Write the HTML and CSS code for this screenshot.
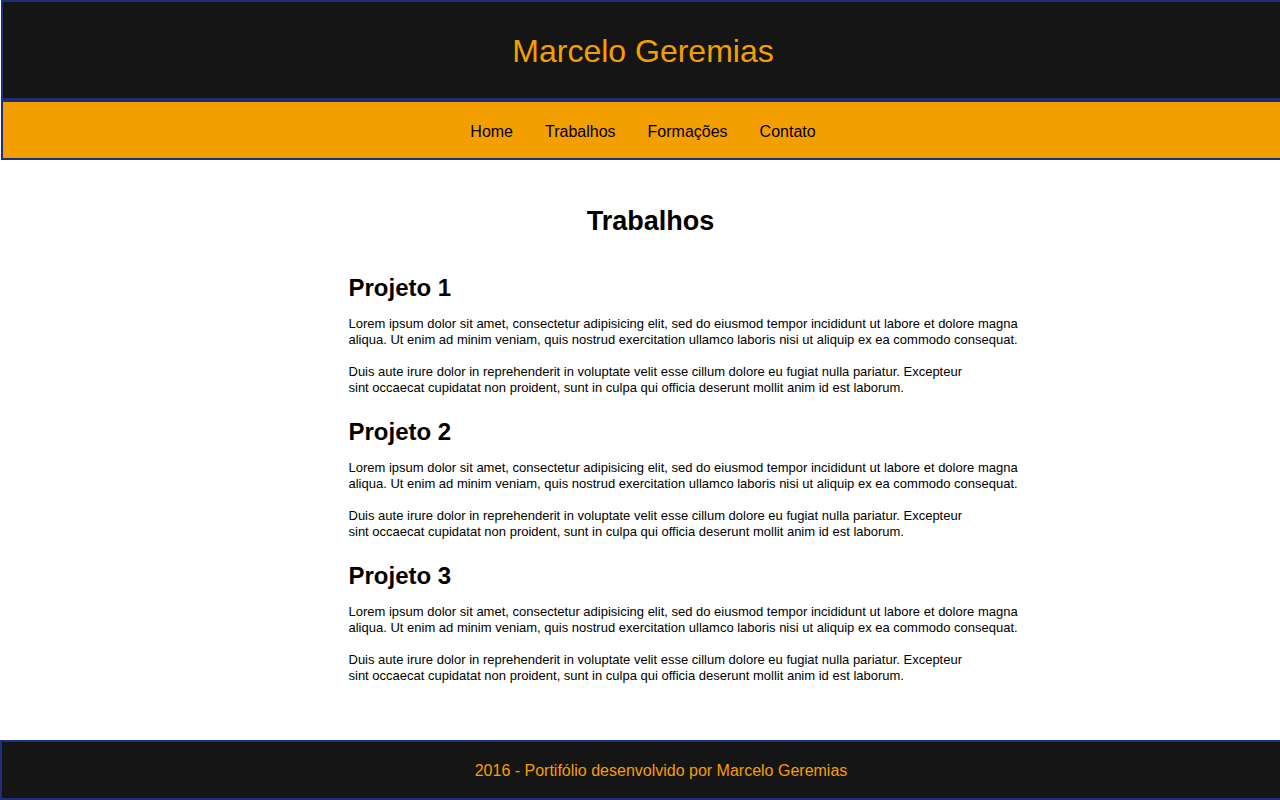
FILE: index.html
```html
<!DOCTYPE html>
<html lang="pt-BR">
<head>
<meta charset="utf-8">
<title>Marcelo Geremias - Trabalhos</title>
<link rel="stylesheet" href="styles.css">
</head>
<body>
<div class="page">
  <header class="site-header">
    <h1 class="site-title">Marcelo Geremias</h1>
  </header>
  <nav class="site-nav">
    <a href="#">Home</a>
    <a href="#">Trabalhos</a>
    <a href="#">Formações</a>
    <a href="#">Contato</a>
  </nav>
  <main class="content">
    <h1 class="page-title">Trabalhos</h1>
    <section class="project">
      <h2>Projeto 1</h2>
      <p>Lorem ipsum dolor sit amet, consectetur adipisicing elit, sed do eiusmod tempor incididunt ut labore et dolore magna<br>aliqua. Ut enim ad minim veniam, quis nostrud exercitation ullamco laboris nisi ut aliquip ex ea commodo consequat.</p>
      <p>Duis aute irure dolor in reprehenderit in voluptate velit esse cillum dolore eu fugiat nulla pariatur. Excepteur<br>sint occaecat cupidatat non proident, sunt in culpa qui officia deserunt mollit anim id est laborum.</p>
    </section>
    <section class="project">
      <h2>Projeto 2</h2>
      <p>Lorem ipsum dolor sit amet, consectetur adipisicing elit, sed do eiusmod tempor incididunt ut labore et dolore magna<br>aliqua. Ut enim ad minim veniam, quis nostrud exercitation ullamco laboris nisi ut aliquip ex ea commodo consequat.</p>
      <p>Duis aute irure dolor in reprehenderit in voluptate velit esse cillum dolore eu fugiat nulla pariatur. Excepteur<br>sint occaecat cupidatat non proident, sunt in culpa qui officia deserunt mollit anim id est laborum.</p>
    </section>
    <section class="project">
      <h2>Projeto 3</h2>
      <p>Lorem ipsum dolor sit amet, consectetur adipisicing elit, sed do eiusmod tempor incididunt ut labore et dolore magna<br>aliqua. Ut enim ad minim veniam, quis nostrud exercitation ullamco laboris nisi ut aliquip ex ea commodo consequat.</p>
      <p>Duis aute irure dolor in reprehenderit in voluptate velit esse cillum dolore eu fugiat nulla pariatur. Excepteur<br>sint occaecat cupidatat non proident, sunt in culpa qui officia deserunt mollit anim id est laborum.</p>
    </section>
  </main>
  <footer class="site-footer">
    <p>2016 - Portifólio desenvolvido por Marcelo Geremias</p>
  </footer>
</div>
</body>
</html>
```

FILE: styles.css
```css
html, body {
  margin: 0;
  padding: 0;
  overflow-x: hidden;
  background: #ffffff;
  font-family: "Liberation Sans", Arial, sans-serif;
  color: #000000;
}

.page {
  display: flex;
  flex-direction: column;
  min-height: 100vh;
}

.site-header {
  background: #151515;
  border: 2px solid #1d2f7a;
  height: 96px;
  margin-left: 1px;
  width: 100%;
  display: flex;
  align-items: center;
  justify-content: center;
  flex-shrink: 0;
}

.site-title {
  margin: 0;
  padding-top: 2px;
  font-size: 32px;
  font-weight: normal;
  color: #f49f00;
  line-height: 37px;
}

.site-nav {
  background: #f49f00;
  border: 2px solid #1d2f7a;
  height: 52px;
  padding-top: 4px;
  margin-left: 1px;
  width: 100%;
  display: flex;
  align-items: center;
  justify-content: center;
  flex-shrink: 0;
}

.site-nav a {
  color: #000000;
  text-decoration: none;
  font-size: 16px;
  padding: 0 16px;
}

.content {
  flex: 1;
  width: 584px;
  margin: 0 auto;
  padding-top: 46px;
  padding-left: 1px;
}

.page-title {
  margin: 0 0 37px 0;
  padding-left: 20px;
  text-align: center;
  font-size: 27px;
  line-height: 31px;
  font-weight: bold;
}

.project {
  margin-bottom: 22px;
}

.project h2 {
  margin: 0 0 14px 0;
  font-size: 24px;
  line-height: 28px;
  font-weight: bold;
}

.project p {
  margin: 0 0 16px 0;
  font-size: 13px;
  line-height: 16px;
  white-space: nowrap;
}

.project p:last-child {
  margin-bottom: 0;
}

.site-footer {
  background: #151515;
  border: 2px solid #1d2f7a;
  height: 56px;
  width: 100%;
  display: flex;
  align-items: center;
  justify-content: center;
  flex-shrink: 0;
}

.site-footer p {
  margin: 0;
  padding-left: 38px;
  padding-top: 2px;
  color: #f49f00;
  font-size: 16px;
}
```
